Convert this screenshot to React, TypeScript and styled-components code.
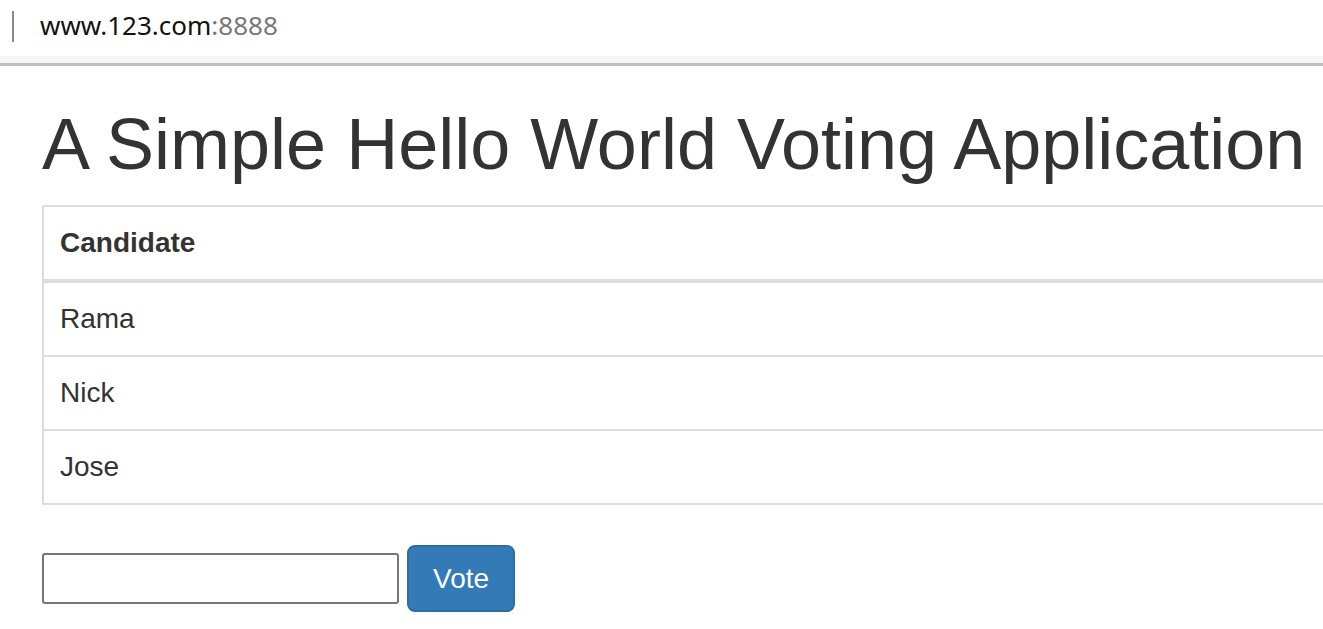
import React from "react";
import styled, { createGlobalStyle } from "styled-components";

const Global = createGlobalStyle`
  html, body { margin: 0; padding: 0; background: #fff; overflow: hidden; }
  body { font-family: "Liberation Sans", Arial, Helvetica, sans-serif; color: #333; }
  * { box-sizing: border-box; }
`;

const AddressBar = styled.div`
  height: 66px;
  display: flex;
  flex-direction: column;
`;

const AddressRow = styled.div`
  height: 56px;
  display: flex;
  align-items: center;
  padding-left: 12px;
  background: #fff;
`;

const Caret = styled.span`
  width: 2px;
  height: 31px;
  background: #8a8a8a;
  margin-top: -4px;
  margin-right: 26px;
`;

const Url = styled.span`
  font-family: "Noto Sans", "Open Sans", sans-serif;
  font-size: 26px;
  color: #111;
  margin-top: -6px;
`;

const Port = styled.span`
  color: #777;
`;

const Band = styled.div`
  height: 7px;
  background: #f5f5f5;
`;

const Rule = styled.div`
  height: 3px;
  background: #bdbdbd;
`;

const Page = styled.main`
  padding-left: 42px;
`;

const Title = styled.h1`
  font-size: 72px;
  font-weight: 400;
  line-height: 1.1;
  margin: 39px 0 21px;
  color: #333;
  white-space: nowrap;
`;

const Table = styled.table`
  width: 100%;
  border-collapse: collapse;
  border: 2px solid #ddd;
  border-right: 0;
  font-size: 28px;
  line-height: 40px;
`;

const Th = styled.th`
  text-align: left;
  font-weight: 700;
  padding: 16px 16px;
  border: 2px solid #ddd;
  border-right: 0;
  border-bottom: 4px solid #ddd;
`;

const Td = styled.td`
  padding: 16px 16px;
  border: 2px solid #ddd;
  border-right: 0;
  height: 74px;
`;

const Form = styled.div`
  display: flex;
  align-items: center;
  gap: 8px;
  margin-top: 40px;
`;

const Input = styled.input`
  width: 357px;
  height: 51px;
  border: 2px solid #767676;
  border-radius: 3px;
  font-size: 28px;
  padding: 0 6px;
  outline: none;
`;

const Button = styled.button`
  font-family: "Liberation Sans", Arial, sans-serif;
  font-size: 28px;
  line-height: 40px;
  padding: 12px 24px;
  color: #fff;
  background: #337ab7;
  border: 2px solid #2e6da4;
  border-radius: 8px;
  cursor: pointer;
  height: 67px;
`;

const candidates = ["Rama", "Nick", "Jose"];

export default function App() {
  return (
    <>
      <Global />
      <AddressBar>
        <AddressRow>
          <Caret />
          <Url>
            www.123.com<Port>:8888</Port>
          </Url>
        </AddressRow>
        <Band />
        <Rule />
      </AddressBar>
      <Page>
        <Title>A Simple Hello World Voting Application</Title>
        <Table>
          <thead>
            <tr>
              <Th>Candidate</Th>
            </tr>
          </thead>
          <tbody>
            {candidates.map((c) => (
              <tr key={c}>
                <Td>{c}</Td>
              </tr>
            ))}
          </tbody>
        </Table>
        <Form>
          <Input type="text" />
          <Button>Vote</Button>
        </Form>
      </Page>
    </>
  );
}
